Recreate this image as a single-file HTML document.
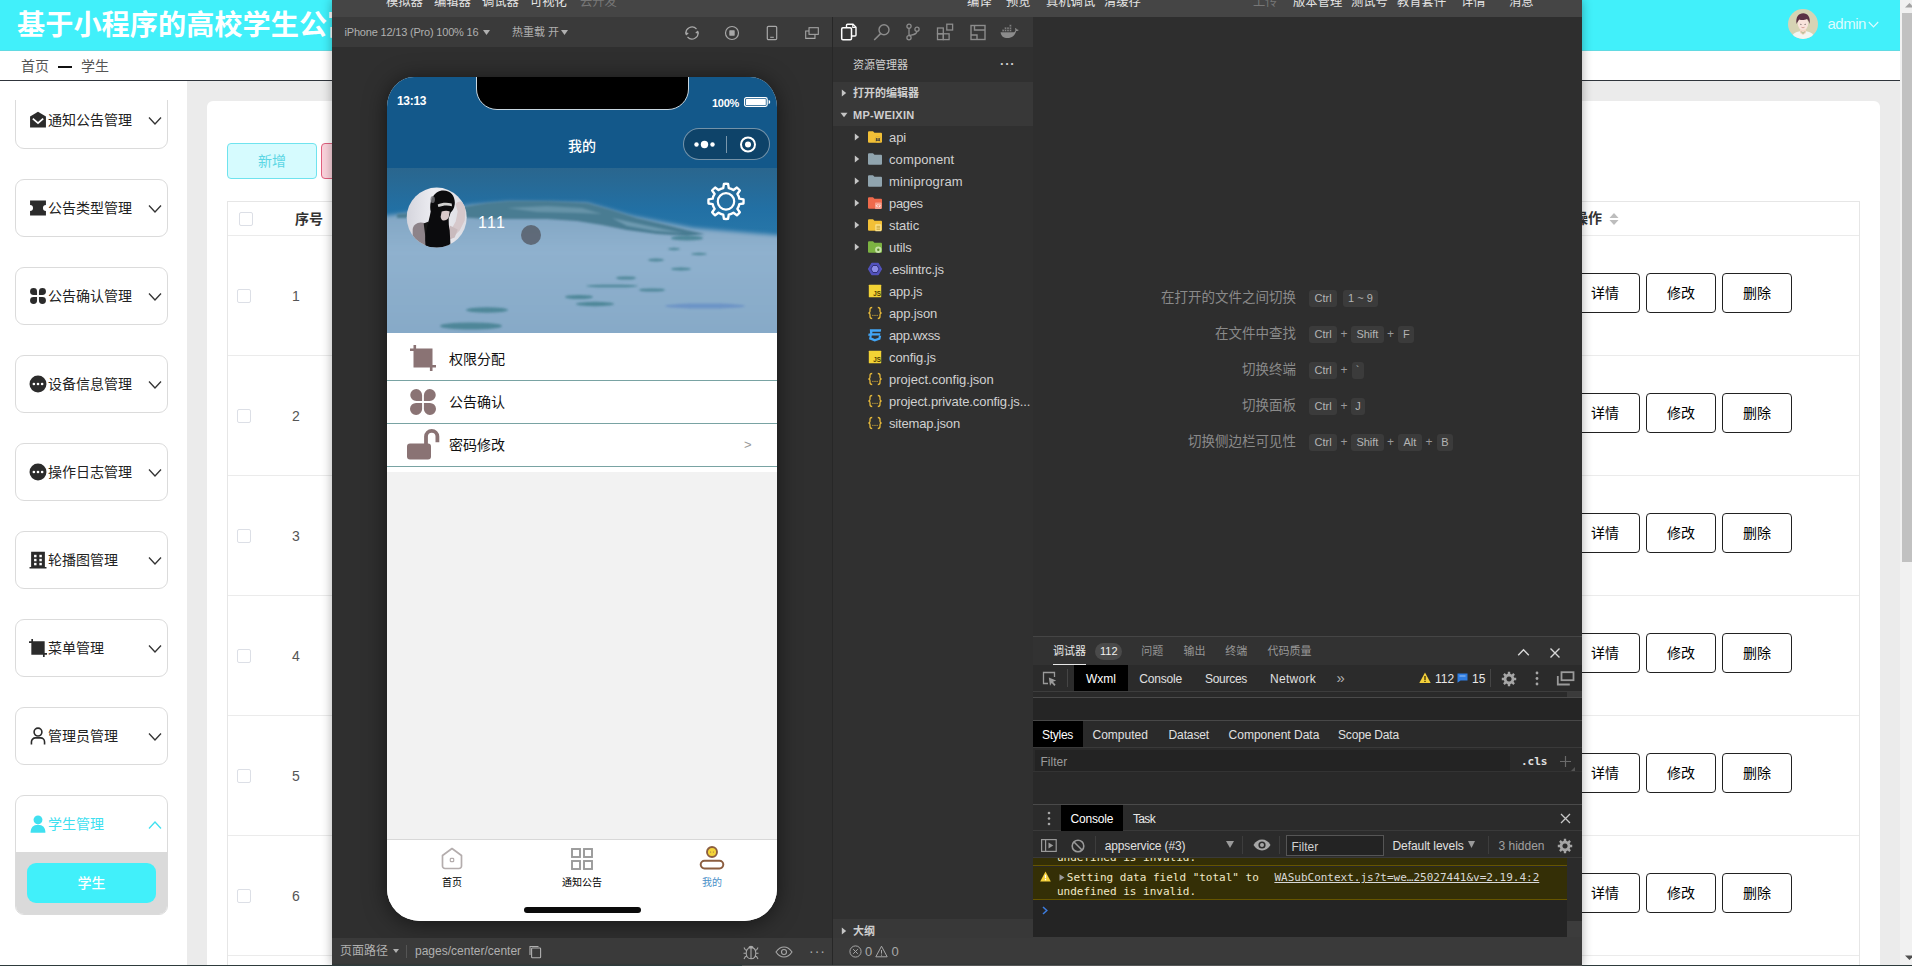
<!DOCTYPE html>
<html lang="zh-CN">
<head>
<meta charset="utf-8">
<title>学生管理</title>
<style>
*{box-sizing:border-box;margin:0;padding:0}
html,body{width:1912px;height:966px;overflow:hidden;background:#fff}
body{position:relative;font-family:"Liberation Sans","Noto Sans CJK SC",sans-serif;font-size:14px;color:#333}
.abs{position:absolute}
/* ---------- admin page ---------- */
#hdr{position:absolute;left:0;top:0;width:1900px;height:51px;background:#41f0fa;border-bottom:1px solid #62dae2}
#hdr .ttl{position:absolute;left:17px;top:4.500px;font-size:28.2px;font-weight:700;color:#fff;white-space:nowrap;line-height:40px;letter-spacing:0}
#crumb{position:absolute;left:0;top:51px;width:1900px;height:30px;background:#fff;border-bottom:1px solid #30353c}
#crumb span{position:absolute;top:6px;font-size:14px;color:#555;line-height:18px}
#side{position:absolute;left:0;top:81px;width:187px;height:885px;background:#fff;overflow:hidden}
#mainbg{position:absolute;left:187px;top:81px;width:1713px;height:885px;background:#ebebeb}
#card{position:absolute;left:207px;top:101px;width:1673px;height:880px;background:#fff;border-radius:6px}
.mi{position:absolute;left:15px;width:153px;height:58px;border:1px solid #dbdbdb;border-radius:9px;background:#fff}
.mi .tx{position:absolute;left:32px;top:18px;font-size:14px;line-height:20px;color:#222;white-space:nowrap}
.mi svg.ic{position:absolute;left:12.500px;top:19px;width:18px;height:18px}
.mi svg.cv{position:absolute;left:132px;top:24px;width:14px;height:10px}
#scroll{position:absolute;left:1900px;top:0;width:12px;height:966px;background:#f1f1f1}
.btn{position:absolute;width:70px;height:40px;border:1px solid #222;border-radius:4px;background:#fff;color:#000;font-size:14px;line-height:38px;text-align:center}
.hl{position:absolute;height:1px;background:#ebebeb}
.cb{position:absolute;width:14px;height:14px;border:1px solid #dcdfe6;border-radius:2px;background:#fff}
.num{position:absolute;left:281px;width:30px;text-align:center;font-size:14px;color:#555;line-height:20px}

/* ---------- devtools ---------- */
#dev{position:absolute;left:332px;top:0;width:1250px;height:966px;background:#2e2e2e;box-shadow:0 0 10px rgba(0,0,0,.32);font-family:"Liberation Sans","Noto Sans CJK SC",sans-serif;color:#ccc;overflow:hidden}
#dev .mb{position:absolute;left:0;top:0;width:1250px;height:17px;background:#454545}
#dev .mb span{position:absolute;top:-5.600px;font-size:12.3px;line-height:16px;color:#e4e4e4;white-space:nowrap}
#dev .tb{position:absolute;left:0;top:17px;width:501px;height:30px;background:#3a3a3a}
#sim{position:absolute;left:0;top:47px;width:501px;height:891px;background:#2f2f2f}
#simbar{position:absolute;left:0;top:938px;width:501px;height:28px;background:#3a3a3a}
#sb{position:absolute;left:501px;top:17px;width:200px;height:949px;background:#303030;box-shadow:-1px 0 0 #272727}
#ed{position:absolute;left:701px;top:17px;width:549px;height:949px;background:#2e2e2e}
.tr{position:absolute;left:0;width:200px;height:22px}
.tr .t{position:absolute;left:56px;top:2.500px;font-size:13px;line-height:18px;color:#d0d0d0;white-space:nowrap}
.tr svg.fi{position:absolute;left:34px;top:3px;width:16px;height:16px}
.tr svg.ar{position:absolute;left:21px;top:7px;width:6px;height:8px}
.kl{position:absolute;right:286px;margin-top:1px;font-size:13.5px;line-height:18px;color:#8a8a8a;white-space:nowrap}
.kb{position:absolute;height:17px;border-radius:3px;background:#3b3b3b;color:#b4b4b4;font-size:11px;line-height:17px;text-align:center}
.kp{position:absolute;margin-top:1px;font-size:12px;line-height:17px;color:#999}

#ph{position:absolute;left:55px;top:30px;width:390px;height:844px;border-radius:27px 27px 33px 33px/30px 30px 32px 32px;overflow:hidden;background:#f2f2f2;box-shadow:0 2px 22px rgba(0,0,0,.55)}
#ph .nav{position:absolute;left:0;top:0;width:390px;height:91px;background:#13588a}
#ph .row{position:absolute;left:0;width:390px;background:#fff;border-bottom:1px solid #79a3a3}
#ph .row .t{position:absolute;left:62px;font-size:14px;line-height:20px;color:#111}
#ph .tab{position:absolute;top:799px;width:80px;text-align:center;font-size:10px;line-height:14px;color:#000}

#dbg{position:absolute;left:0;top:619px;width:549px;height:302px;background:#292929;font-size:12px}
#dbg .g{position:absolute;left:0;width:549px}
#dbg .t{position:absolute;white-space:nowrap;line-height:16px}
#dbg .mono{font-family:"DejaVu Sans Mono","Liberation Mono",monospace}
</style>
</head>
<body>
<!-- ================= ADMIN PAGE ================= -->
<div id="hdr">
  <div class="ttl">基于小程序的高校学生公寓管理系统</div>
  <svg class="abs" style="left:1788px;top:9px" width="30" height="30" viewBox="0 0 30 30">
    <defs><clipPath id="avc"><circle cx="15" cy="15" r="15"/></clipPath></defs>
    <g clip-path="url(#avc)">
      <rect width="30" height="30" fill="#d6d3b4"/>
      <path d="M3 30c1-6 6-8 12-8s11 2 12 8z" fill="#f3f6f2"/>
      <path d="M12 20h6v4l-3 2-3-2z" fill="#f4d6c4"/>
      <ellipse cx="15" cy="14.800" rx="5.200" ry="6.200" fill="#f9e3dc"/>
      <path d="M8.600 15c-1.200-7 2-10.800 6.600-10.800 4.400 0 7.600 3.600 6.300 10.800-.6-2.600-1.300-4.200-2.600-5-2 1.200-5.600 1.400-7.600.5-1 1-1.800 2.500-2.700 4.500z" fill="#5b3045"/>
      <circle cx="12.900" cy="15.200" r=".55" fill="#3a2a2a"/><circle cx="17.100" cy="15.200" r=".55" fill="#3a2a2a"/>
      <path d="M13.200 22.500l1.800 2 1.800-2" stroke="#8fae7a" stroke-width=".9" fill="none"/>
      <path d="M13.500 18.300q1.500.9 3 0" stroke="#c0736a" stroke-width=".6" fill="none"/>
    </g>
  </svg>
  <div class="abs" style="left:1827.500px;top:13.500px;font-size:15px;letter-spacing:-.5px;line-height:20px;color:#dcfcff">admin</div>
  <svg class="abs" style="left:1867.500px;top:21px" width="11" height="7" viewBox="0 0 11 7"><path d="M.8 1l4.700 4.800L10.200 1" fill="none" stroke="#dcfcff" stroke-width="1.200"/></svg>
</div>
<div id="crumb">
  <span style="left:21px">首页</span>
  <div class="abs" style="left:58px;top:15px;width:14px;height:2px;background:#111"></div>
  <span style="left:81px">学生</span>
</div>
<div id="mainbg"></div>
<div id="side"></div>
<div class="abs" style="left:0;top:100px;width:187px;height:866px;overflow:hidden">
<div class="mi" style="top:-9.0px"><svg class="ic" viewBox="0 0 17 17"><path d="M8.500.6L16 5.200V15.600H1V5.200z" fill="#2b2b2b"/><path d="M3.600 7.200l4.900 4.300 4.900-4.300" fill="none" stroke="#fff" stroke-width="1.700"/></svg><div class="tx">通知公告管理</div><svg class="cv" viewBox="0 0 14 10"><path d="M1 1.500l6 6.500 6-6.500" fill="none" stroke="#333" stroke-width="1.300"/></svg></div>
<div class="mi" style="top:79.0px"><svg class="ic" viewBox="0 0 17 17"><path d="M1 1.500h15v4.200a2.800 2.800 0 0 0 0 5.600v4.200H1v-4.200a2.800 2.800 0 0 0 0-5.600z" fill="#2b2b2b"/></svg><div class="tx">公告类型管理</div><svg class="cv" viewBox="0 0 14 10"><path d="M1 1.500l6 6.500 6-6.500" fill="none" stroke="#333" stroke-width="1.300"/></svg></div>
<div class="mi" style="top:167.0px"><svg class="ic" viewBox="0 0 17 17"><path d="M4.300 1A3.300 3.300 0 0 1 7.600 4.300V7.600H4.300A3.300 3.300 0 0 1 4.300 1zM12.700 1A3.300 3.300 0 0 1 12.700 7.600H9.400V4.300A3.300 3.300 0 0 1 12.700 1zM4.300 9.400H7.600V12.700A3.300 3.300 0 1 1 4.300 9.400zM9.400 9.400H12.700A3.300 3.300 0 1 1 9.400 12.700z" fill="#2b2b2b"/></svg><div class="tx">公告确认管理</div><svg class="cv" viewBox="0 0 14 10"><path d="M1 1.500l6 6.500 6-6.500" fill="none" stroke="#333" stroke-width="1.300"/></svg></div>
<div class="mi" style="top:255.0px"><svg class="ic" viewBox="0 0 17 17"><circle cx="8.500" cy="8.500" r="8" fill="#2b2b2b"/><circle cx="4.600" cy="8.500" r="1.250" fill="#fff"/><circle cx="8.500" cy="8.500" r="1.250" fill="#fff"/><circle cx="12.400" cy="8.500" r="1.250" fill="#fff"/></svg><div class="tx">设备信息管理</div><svg class="cv" viewBox="0 0 14 10"><path d="M1 1.500l6 6.500 6-6.500" fill="none" stroke="#333" stroke-width="1.300"/></svg></div>
<div class="mi" style="top:343.0px"><svg class="ic" viewBox="0 0 17 17"><circle cx="8.500" cy="8.500" r="8" fill="#2b2b2b"/><circle cx="4.600" cy="8.500" r="1.250" fill="#fff"/><circle cx="8.500" cy="8.500" r="1.250" fill="#fff"/><circle cx="12.400" cy="8.500" r="1.250" fill="#fff"/></svg><div class="tx">操作日志管理</div><svg class="cv" viewBox="0 0 14 10"><path d="M1 1.500l6 6.500 6-6.500" fill="none" stroke="#333" stroke-width="1.300"/></svg></div>
<div class="mi" style="top:431.0px"><svg class="ic" viewBox="0 0 17 17"><path d="M2 .8h13v14.400h1.500v1.300H.5v-1.300H2z" fill="#2b2b2b"/><g fill="#fff"><rect x="4.800" y="3.600" width="2.300" height="2.300"/><rect x="9.800" y="3.600" width="2.300" height="2.300"/><rect x="4.800" y="7.400" width="2.300" height="2.300"/><rect x="9.800" y="7.400" width="2.300" height="2.300"/><rect x="4.800" y="11.200" width="2.300" height="2.300"/><rect x="9.800" y="11.200" width="2.300" height="2.300"/></g></svg><div class="tx">轮播图管理</div><svg class="cv" viewBox="0 0 14 10"><path d="M1 1.500l6 6.500 6-6.500" fill="none" stroke="#333" stroke-width="1.300"/></svg></div>
<div class="mi" style="top:519.0px"><svg class="ic" viewBox="0 0 17 17"><path d="M2.200 0h1.600v2.200H14.800V13.200H17v1.600H14.800V17H13.200V14.800H2.200V3.800H0V2.200H2.200z" fill="#2b2b2b"/></svg><div class="tx">菜单管理</div><svg class="cv" viewBox="0 0 14 10"><path d="M1 1.500l6 6.500 6-6.500" fill="none" stroke="#333" stroke-width="1.300"/></svg></div>
<div class="mi" style="top:607.0px"><svg class="ic" viewBox="0 0 17 17"><circle cx="8.500" cy="4.800" r="3.700" fill="none" stroke="#2b2b2b" stroke-width="1.500"/><path d="M2.300 16.500v-2.400a3.800 3.800 0 0 1 3.800-3.800h4.800a3.800 3.800 0 0 1 3.800 3.800v2.400" fill="none" stroke="#2b2b2b" stroke-width="1.500"/></svg><div class="tx">管理员管理</div><svg class="cv" viewBox="0 0 14 10"><path d="M1 1.500l6 6.500 6-6.500" fill="none" stroke="#333" stroke-width="1.300"/></svg></div>
<div class="mi" style="top:695.0px;height:120px;overflow:hidden"><svg class="ic" viewBox="0 0 17 17"><circle cx="8.500" cy="4.600" r="4.200" fill="#40e0f0"/><path d="M1.500 16.800c0-5 2.500-7.600 7-7.600s7 2.600 7 7.600z" fill="#40e0f0"/></svg><div class="tx" style="color:#40e0f0">学生管理</div><svg class="cv" viewBox="0 0 14 10"><path d="M1 8.500l6-6.500 6 6.500" fill="none" stroke="#40e0f0" stroke-width="1.300"/></svg><div class="abs" style="left:0;top:56px;width:152px;height:64px;background:#dadada"></div><div class="abs" style="left:11px;top:67px;width:129px;height:40px;border-radius:9px;background:#41f0fa;color:#fff;font-size:14px;font-weight:500;line-height:41px;text-align:center">学生</div></div>
</div>
<div id="card"></div>
<div class="abs" style="left:227px;top:143px;width:90px;height:36px;border:1px solid #6fe3ee;border-radius:4px;background:#d6fbfe;color:#5bd6e4;font-size:14px;line-height:34px;text-align:center">新增</div>
<div class="abs" style="left:321px;top:143px;width:90px;height:36px;border:1px solid #e0607e;border-radius:4px;background:#fbd3dc;color:#e0607e;font-size:14px;line-height:34px;text-align:center">删除</div>
<div class="abs" style="left:227px;top:201px;width:1633px;height:780px;border:1px solid #e6e6e6;border-bottom:none"></div>
<div class="cb" style="left:239px;top:212px"></div>
<div class="abs" style="left:295px;top:209px;font-size:14px;font-weight:700;color:#333;line-height:20px">序号</div>
<div class="abs" style="left:1574px;top:208px;font-size:14px;font-weight:700;color:#333;line-height:20px">操作</div>
<svg class="abs" style="left:1609px;top:212px" width="10" height="14" viewBox="0 0 10 14"><path d="M5 1L9.500 6H.5z" fill="#bdbdbd"/><path d="M5 13L9.500 8H.5z" fill="#bdbdbd"/></svg>
<div class="hl" style="left:228px;top:235px;width:1631px"></div>
<div class="hl" style="left:228px;top:355px;width:1631px"></div>
<div class="hl" style="left:228px;top:475px;width:1631px"></div>
<div class="hl" style="left:228px;top:595px;width:1631px"></div>
<div class="hl" style="left:228px;top:715px;width:1631px"></div>
<div class="hl" style="left:228px;top:835px;width:1631px"></div>
<div class="hl" style="left:228px;top:955px;width:1631px"></div>
<div class="cb" style="left:237px;top:289.0px"></div>
<div class="num" style="top:286.0px">1</div>
<div class="btn" style="left:1570px;top:273px">详情</div>
<div class="btn" style="left:1646px;top:273px">修改</div>
<div class="btn" style="left:1722px;top:273px">删除</div>
<div class="cb" style="left:237px;top:409.0px"></div>
<div class="num" style="top:406.0px">2</div>
<div class="btn" style="left:1570px;top:393px">详情</div>
<div class="btn" style="left:1646px;top:393px">修改</div>
<div class="btn" style="left:1722px;top:393px">删除</div>
<div class="cb" style="left:237px;top:529.0px"></div>
<div class="num" style="top:526.0px">3</div>
<div class="btn" style="left:1570px;top:513px">详情</div>
<div class="btn" style="left:1646px;top:513px">修改</div>
<div class="btn" style="left:1722px;top:513px">删除</div>
<div class="cb" style="left:237px;top:649.0px"></div>
<div class="num" style="top:646.0px">4</div>
<div class="btn" style="left:1570px;top:633px">详情</div>
<div class="btn" style="left:1646px;top:633px">修改</div>
<div class="btn" style="left:1722px;top:633px">删除</div>
<div class="cb" style="left:237px;top:769.0px"></div>
<div class="num" style="top:766.0px">5</div>
<div class="btn" style="left:1570px;top:753px">详情</div>
<div class="btn" style="left:1646px;top:753px">修改</div>
<div class="btn" style="left:1722px;top:753px">删除</div>
<div class="cb" style="left:237px;top:889.0px"></div>
<div class="num" style="top:886.0px">6</div>
<div class="btn" style="left:1570px;top:873px">详情</div>
<div class="btn" style="left:1646px;top:873px">修改</div>
<div class="btn" style="left:1722px;top:873px">删除</div>
<div id="scroll">
  <div class="abs" style="left:2px;top:13px;width:10px;height:549px;background:#c1c1c1"></div>
  <svg class="abs" style="left:5px;top:3px" width="9" height="5" viewBox="0 0 9 5"><path d="M0 4.500L4.500 0 9 4.500z" fill="#a3a3a3"/></svg>
  <svg class="abs" style="left:5px;top:955px" width="9" height="5" viewBox="0 0 9 5"><path d="M0 .5L4.500 5 9 .5z" fill="#505050"/></svg>
</div>
<!-- ================= DEVTOOLS WINDOW ================= -->
<div id="dev">
<div class="mb"><span style="left:54px">模拟器</span><span style="left:102px">编辑器</span><span style="left:150px">调试器</span><span style="left:198px">可视化</span><span style="left:248px;color:#777">云开发</span><span style="left:635px">编译</span><span style="left:674px">预览</span><span style="left:714px">真机调试</span><span style="left:772px">清缓存</span><span style="left:921px;color:#777">上传</span><span style="left:961px">版本管理</span><span style="left:1019px">测试号</span><span style="left:1065px">教育套件</span><span style="left:1129px">详情</span><span style="left:1177px">消息</span></div>
<div class="tb"><div class="abs" style="left:12.500px;top:7px;font-size:11px;letter-spacing:-.19px;line-height:16px;color:#b0b0b0;white-space:nowrap">iPhone 12/13 (Pro) 100% 16</div><svg class="abs" style="left:150.500px;top:13px" width="7" height="5" viewBox="0 0 7 5"><path d="M0 0h7L3.500 5z" fill="#b0b0b0"/></svg><div class="abs" style="left:180px;top:7px;font-size:11px;line-height:16px;color:#b0b0b0;white-space:nowrap">热重载 开</div><svg class="abs" style="left:229px;top:13px" width="7" height="5" viewBox="0 0 7 5"><path d="M0 0h7L3.500 5z" fill="#b0b0b0"/></svg><svg class="abs" style="left:352px;top:8px" width="16" height="16" viewBox="0 0 16 16"><path d="M2.300 9.800A6 6 0 0 1 12.500 4M13.700 6.200A6 6 0 0 1 3.500 12" fill="none" stroke="#a8a8a8" stroke-width="1.200"/><path d="M1 7.200l1.500 3.400 2.300-2.600zM15 8.800l-1.500-3.400-2.300 2.600z" fill="#a8a8a8"/></svg><svg class="abs" style="left:392px;top:8px" width="16" height="16" viewBox="0 0 16 16"><circle cx="8" cy="8" r="6.500" fill="none" stroke="#a8a8a8" stroke-width="1.200"/><rect x="5.300" y="5.300" width="5.400" height="5.400" rx=".6" fill="#a8a8a8"/></svg><svg class="abs" style="left:434px;top:8px" width="12" height="16" viewBox="0 0 12 16"><rect x="1.300" y="1.300" width="9.400" height="13.400" rx="1.200" fill="none" stroke="#a8a8a8" stroke-width="1.200"/><path d="M4.200 12.300h3.600" stroke="#a8a8a8" stroke-width="1.100"/></svg><svg class="abs" style="left:473px;top:10px" width="14" height="12.250" viewBox="0 0 16 14"><rect x="4.600" y=".8" width="10.600" height="7.600" fill="none" stroke="#a8a8a8" stroke-width="1.200"/><path d="M4.600 4.600H.8v8.400h10.600V8.600" fill="none" stroke="#a8a8a8" stroke-width="1.200"/></svg></div>
<div id="sim">
<div id="ph">
 <div class="nav">
  <div class="abs" style="left:89px;top:-2px;width:213px;height:35px;background:#000;border-radius:0 0 21px 21px;border:1px solid #c8d6e0"></div>
  <div class="abs" style="left:10px;top:16px;font-size:12px;font-weight:700;line-height:16px;color:#fff;letter-spacing:-.3px">13:13</div>
  <div class="abs" style="left:325px;top:18px;font-size:11px;font-weight:700;line-height:16px;color:#fff;letter-spacing:-.3px">100%</div>
  <svg class="abs" style="left:357px;top:20px" width="27" height="10" viewBox="0 0 27 10"><rect x=".6" y=".6" width="22.600" height="8.800" rx="1.800" fill="none" stroke="#fff" stroke-width="1.200"/><rect x="2" y="2" width="19.800" height="6" rx=".6" fill="#fff"/><path d="M24.600 3v4c1.300-.3 1.600-1.200 1.600-2s-.3-1.700-1.600-2z" fill="#fff"/></svg>
  <div class="abs" style="left:165px;top:59px;width:60px;text-align:center;font-size:14px;font-weight:500;line-height:20px;color:#fff">我的</div>
  <div class="abs" style="left:296px;top:51px;width:87px;height:32px;border-radius:16px;border:1px solid rgba(255,255,255,.42);background:rgba(0,0,0,.24)"></div>
  <svg class="abs" style="left:296px;top:51px" width="87" height="32" viewBox="0 0 87 32"><circle cx="13.500" cy="16.500" r="2.200" fill="#fff"/><circle cx="21.500" cy="16.500" r="3.700" fill="#fff"/><circle cx="29.500" cy="16.500" r="2.200" fill="#fff"/><path d="M43.500 8v17" stroke="rgba(255,255,255,.45)" stroke-width="1"/><circle cx="65" cy="16.500" r="7" fill="none" stroke="#fff" stroke-width="2"/><circle cx="65" cy="16.500" r="3" fill="#fff"/></svg>
 </div>
 <svg class="abs" style="left:0;top:91px" width="390" height="165" viewBox="0 0 390 165">
  <defs>
   <linearGradient id="sky" x1="0" y1="0" x2="0" y2="1"><stop offset="0" stop-color="#2a668e"/><stop offset=".25" stop-color="#2270a4"/><stop offset=".5" stop-color="#2a7aac"/><stop offset="1" stop-color="#3a82b0"/></linearGradient>
   <linearGradient id="snow" x1="0" y1="0" x2="0" y2="1"><stop offset="0" stop-color="#7ea3c1"/><stop offset=".35" stop-color="#8fb1ce"/><stop offset="1" stop-color="#86a9c7"/></linearGradient>
   <filter id="b3" x="-10%" y="-10%" width="120%" height="120%"><feGaussianBlur stdDeviation="2.200"/></filter>
   <filter id="b1" x="-10%" y="-30%" width="120%" height="160%"><feGaussianBlur stdDeviation="1.300"/></filter>
  </defs>
  <rect width="390" height="165" fill="url(#sky)"/>
  <path d="M-10 49L20 45 60 42 82 37 122 34 200 35 245 48 306 60 400 68V175H-10z" fill="url(#snow)" filter="url(#b3)"/>
  <path d="M70 40L100 35 122 33 160 33 200 35 225 42 250 50 280 57 300 62 318 66 300 68 270 66 240 62 215 57 190 53 160 51 130 51 100 51 70 49 40 50 10 50 10 46 40 44z" fill="#497b92" filter="url(#b1)"/>
  <path d="M120 40L160 38 195 40 215 46 190 45 150 44z" fill="#7ea6ba" opacity=".55" filter="url(#b1)"/>
  <path d="M225 50L262 58 296 65 268 63 240 58z" fill="#86adc4" opacity=".6" filter="url(#b1)"/>
  <g fill="#3f7e8d" filter="url(#b1)" opacity=".8">
   <ellipse cx="100" cy="142" rx="21" ry="2.800"/><ellipse cx="84" cy="158" rx="31" ry="3.600"/>
   <ellipse cx="192" cy="129" rx="14" ry="2"/><ellipse cx="208" cy="136" rx="19" ry="2.200"/>
   <ellipse cx="239" cy="110" rx="10" ry="1.600"/><ellipse cx="265" cy="122" rx="13" ry="1.600"/>
   <ellipse cx="269" cy="92" rx="8" ry="1.500"/><ellipse cx="294" cy="101" rx="10" ry="1.500"/>
   <ellipse cx="287" cy="81" rx="6" ry="1.200"/><ellipse cx="312" cy="86" rx="8" ry="1.200"/>
   <ellipse cx="300" cy="70" rx="16" ry="2.600"/><ellipse cx="225" cy="118" rx="26" ry="1.300"/>
  </g>
  <ellipse cx="318" cy="138" rx="40" ry="2.600" fill="#6b92c6" filter="url(#b1)" opacity=".9"/>
  <!-- avatar -->
  <defs><clipPath id="avp"><circle cx="49.700" cy="49.600" r="30"/></clipPath>
  <linearGradient id="avbg" x1="0" y1="0" x2="1" y2="0"><stop offset="0" stop-color="#d4d4dc"/><stop offset=".45" stop-color="#ededf2"/><stop offset="1" stop-color="#dcdce2"/></linearGradient></defs>
  <g clip-path="url(#avp)"><g transform="translate(19.700,19.600)">
   <rect x="-1" y="-1" width="62" height="62" fill="url(#avbg)"/>
   <path d="M49 17c1-3 5-4 8-2l2 6-1 12-5 10-8 8-4-3 8-14 2-10z" fill="#d6c8cb"/>
   <path d="M43 38l8 4-3 8-8 3z" fill="#c9babd"/>
   <path d="M6 60V42c0-4 4-7 8-7l8 1 2 24z" fill="#8d8389"/>
   <path d="M17 36l5-2 3 26h-5z" fill="#161616"/>
   <path d="M24 24c-2-8 2-20 11-21 9-1 14 6 13 14-.5 4-2 6-4 8l-2 6c0 4 0 8 1 12l1 19-24 2c-2-8-2-14 0-22 1-6 3-12 4-18z" fill="#0b0b0d"/>
   <path d="M35 24c3-1 6-1 8 0l-1 6c-1 2-3 3-5 3s-3-2-3-4z" fill="#d9c9ca"/>
   <path d="M31 17c4-2 9-2.500 14-1l.3 2.600c-5-1.300-9-.8-13.600.9z" fill="#e6e6e6" opacity=".9"/>
   <ellipse cx="26" cy="12" rx="2.200" ry="3.500" fill="#77777c" opacity=".8"/>
  </g></g>
  <text x="91" y="59.500" font-family="Liberation Sans, sans-serif" font-size="16" fill="#fff" letter-spacing="1.300">111</text>
  <circle cx="144" cy="67" r="10" fill="#555c66" opacity=".82"/>
  <g transform="translate(319,13.400) scale(1)">
   <path d="M17.24 6.68L17.93 2.52A17.60 17.60 0 0 1 22.07 2.52L22.76 6.68A13.60 13.60 0 0 1 27.47 8.63L30.90 6.18A17.60 17.60 0 0 1 33.82 9.10L31.37 12.53A13.60 13.60 0 0 1 33.32 17.24L37.48 17.93A17.60 17.60 0 0 1 37.48 22.07L33.32 22.76A13.60 13.60 0 0 1 31.37 27.47L33.82 30.90A17.60 17.60 0 0 1 30.90 33.82L27.47 31.37A13.60 13.60 0 0 1 22.76 33.32L22.07 37.48A17.60 17.60 0 0 1 17.93 37.48L17.24 33.32A13.60 13.60 0 0 1 12.53 31.37L9.10 33.82A17.60 17.60 0 0 1 6.18 30.90L8.63 27.47A13.60 13.60 0 0 1 6.68 22.76L2.52 22.07A17.60 17.60 0 0 1 2.52 17.93L6.68 17.24A13.60 13.60 0 0 1 8.63 12.53L6.18 9.10A17.60 17.60 0 0 1 9.10 6.18L12.53 8.63A13.60 13.60 0 0 1 17.24 6.68Z" fill="none" stroke="#fff" stroke-width="2.400" stroke-linejoin="round"/>
   <circle cx="20" cy="20" r="8.200" fill="none" stroke="#fff" stroke-width="2.200"/>
  </g>
 </svg>
 <div class="row" style="top:256px;height:48px"><div class="t" style="top:16px">权限分配</div>
  <svg class="abs" style="left:22px;top:11px" width="28" height="28" viewBox="0 0 28 28"><path d="M4.500 1h2.600v3.500H23.500V20.900H27v2.600H23.500V27H20.900V23.500H4.500V7.100H1V4.500H4.500z" fill="#8a7374"/></svg></div>
 <div class="row" style="top:304px;height:43px"><div class="t" style="top:11px">公告确认</div>
  <svg class="abs" style="left:23px;top:8px" width="26" height="26" viewBox="0 0 26 26"><path d="M6.300 0A6.300 6.300 0 0 1 12.100 6.300V12.100H6.300A6.050 6.050 0 0 1 6.300 0zM19.700 0A6.050 6.050 0 0 1 19.700 12.100H13.900V6.300A6.300 6.300 0 0 1 19.700 0zM6.300 13.900H12.100V19.700A6.050 6.050 0 1 1 6.300 13.900zM13.900 13.900H19.700A6.050 6.050 0 1 1 13.900 19.700z" fill="#8a7374"/></svg></div>
 <div class="row" style="top:347px;height:43px"><div class="t" style="top:11px">密码修改</div>
  <svg class="abs" style="left:19px;top:3px" width="34" height="33" viewBox="0 0 34 33"><rect x="1" y="16.500" width="24" height="16" rx="3" fill="#8a7374"/><path d="M20 17V9.500a5.700 5.700 0 0 1 11.400 0v5.700" fill="none" stroke="#8a7374" stroke-width="3.800"/></svg>
  <div class="abs" style="left:357px;top:11px;font-size:13px;line-height:20px;color:#999">&gt;</div></div>
 <div class="abs" style="left:0;top:390px;width:390px;height:5px;background:#fff"></div>
 <div class="abs" style="left:0;top:762px;width:390px;height:82px;background:#fff;border-top:1px solid #d8d8d8"></div>
 <svg class="abs" style="left:53px;top:770px" width="24" height="24" viewBox="0 0 24 24"><path d="M2.500 8.500L12 1.500l9.500 7V19a2.500 2.500 0 0 1-2.500 2.500H5A2.500 2.500 0 0 1 2.500 19z" fill="none" stroke="#b4adad" stroke-width="1.700" stroke-linejoin="round"/><rect x="10.300" y="11.300" width="3.400" height="3.400" rx=".8" fill="none" stroke="#b4adad" stroke-width="1.200"/></svg>
 <svg class="abs" style="left:183px;top:770px" width="24" height="24" viewBox="0 0 24 24"><g fill="none" stroke="#9a9a9a" stroke-width="1.900"><rect x="2" y="2" width="8" height="8"/><rect x="14" y="2" width="8" height="8"/><rect x="2" y="14" width="8" height="8"/><rect x="14" y="14" width="8" height="8"/></g></svg>
 <svg class="abs" style="left:312px;top:768px" width="26" height="26" viewBox="0 0 26 26"><circle cx="13" cy="7" r="5" fill="#f4d43a" stroke="#8c5e40" stroke-width="1.900"/><circle cx="11.600" cy="7" r=".6" fill="#9a6a48"/><circle cx="14.400" cy="7" r=".6" fill="#9a6a48"/><rect x="1.700" y="15.800" width="22.600" height="7.600" rx="3.800" fill="#fff" stroke="#8c5e40" stroke-width="2"/></svg>
 <div class="tab" style="left:25px">首页</div>
 <div class="tab" style="left:155px">通知公告</div>
 <div class="tab" style="left:285px;color:#4a90c8">我的</div>
 <div class="abs" style="left:137px;top:830px;width:117px;height:5.500px;border-radius:3px;background:#0a0a0a"></div>
</div>
</div>
<div id="simbar"><div class="abs" style="left:8px;top:5px;font-size:12px;line-height:16px;color:#b0b0b0;white-space:nowrap">页面路径</div><svg class="abs" style="left:61px;top:949px;top:11px" width="6" height="4" viewBox="0 0 6 4"><path d="M0 0h6L3 4z" fill="#b0b0b0"/></svg><div class="abs" style="left:74px;top:7px;width:1px;height:13px;background:#555"></div><div class="abs" style="left:83px;top:5px;font-size:12px;line-height:16px;color:#b0b0b0;white-space:nowrap">pages/center/center</div><svg class="abs" style="left:197px;top:7px" width="13" height="14" viewBox="0 0 13 14"><rect x="2.600" y="3" width="9" height="9.800" rx=".8" fill="none" stroke="#b0b0b0" stroke-width="1.100"/><path d="M1 10V1.500h8.500" fill="none" stroke="#b0b0b0" stroke-width="1.100"/></svg><svg class="abs" style="left:410px;top:5px" width="18" height="18" viewBox="0 0 18 18"><path d="M9 4.600c3 0 4.800 2.300 4.800 5.600S12 15.800 9 15.800 4.200 13.500 4.200 10.200 6 4.600 9 4.600zM9 4.600V15.800M6.600 5.200a2.500 2.500 0 0 1 4.800 0M2 4.500l1.200 2.200 1.600.8M16 4.500l-1.200 2.200-1.600.8M1.500 10.200h2.700M13.800 10.200h2.700M2 16l1.300-2.200 1.500-.7M16 16l-1.300-2.200-1.500-.7" fill="none" stroke="#a8a8a8" stroke-width="1.100"/></svg><svg class="abs" style="left:443px;top:8px" width="18" height="12" viewBox="0 0 18 12"><path d="M1 6c2.200-3.300 5-5 8-5s5.800 1.700 8 5c-2.200 3.300-5 5-8 5s-5.800-1.700-8-5z" fill="none" stroke="#a8a8a8" stroke-width="1.100"/><circle cx="9" cy="6" r="2.500" fill="none" stroke="#a8a8a8" stroke-width="1.100"/></svg><div class="abs" style="left:477px;top:3px;font-size:14px;letter-spacing:1px;color:#a8a8a8;line-height:20px">···</div></div>
<div id="sb">
<div class="abs" style="left:0;top:0;width:200px;height:30px;background:#383838"></div>
<svg class="abs" style="left:7px;top:6px" width="18" height="18" viewBox="0 0 18 18"><path d="M6.500 4.500V2.200a1 1 0 0 1 1-1H13l3 3V12a1 1 0 0 1-1 1h-3" fill="none" stroke="#fff" stroke-width="1.400"/><path d="M12.800 1.500v3h3" fill="none" stroke="#fff" stroke-width="1.200"/><rect x="1.700" y="4.700" width="9.800" height="12" rx="1.200" fill="none" stroke="#fff" stroke-width="1.500"/></svg>
<svg class="abs" style="left:40px;top:6px" width="18" height="18" viewBox="0 0 18 18"><circle cx="11" cy="6.800" r="5" fill="none" stroke="#8c8c8c" stroke-width="1.400"/><path d="M7.600 10.600L1.200 17" stroke="#8c8c8c" stroke-width="1.500"/></svg>
<svg class="abs" style="left:72px;top:6px" width="16" height="18" viewBox="0 0 16 18"><circle cx="4" cy="3.200" r="2.100" fill="none" stroke="#8c8c8c" stroke-width="1.300"/><circle cx="4" cy="14.800" r="2.100" fill="none" stroke="#8c8c8c" stroke-width="1.300"/><circle cx="12" cy="6.200" r="2.100" fill="none" stroke="#8c8c8c" stroke-width="1.300"/><path d="M4 5.300v7.400M12 8.300c0 3-3.500 3.200-8 4.400" fill="none" stroke="#8c8c8c" stroke-width="1.300"/></svg>
<svg class="abs" style="left:103px;top:6px" width="18" height="18" viewBox="0 0 18 18"><g fill="none" stroke="#8c8c8c" stroke-width="1.300"><rect x="1.500" y="5" width="5.800" height="5.800"/><rect x="1.500" y="10.800" width="5.800" height="5.800"/><rect x="7.300" y="10.800" width="5.800" height="5.800"/><rect x="10.800" y="1.200" width="5.800" height="5.800"/></g></svg>
<svg class="abs" style="left:137px;top:7px" width="16" height="17" viewBox="0 0 16 17"><g fill="none" stroke="#8c8c8c" stroke-width="1.400"><rect x="1" y="1.500" width="14" height="14"/><path d="M4.500 1.500V6H15M1 11h6v4.500"/></g></svg>
<svg class="abs" style="left:167px;top:7px" width="19" height="16" viewBox="0 0 19 16"><path d="M.6 8.200h12.600c1 0 1.600-.5 2-1.300.3-1 .2-1.700-.3-2.500.8-.5 1.500.2 1.900 1.100.8-.2 1.500 0 1.900.4-.5.900-1.500 1.200-2.500 1.100C15 11.500 12 14 7.500 14 3.600 14 1 12.200.6 8.200z" fill="#8c8c8c"/><path d="M2.200 5.600h2v2h-2zM4.600 5.600h2v2h-2zM7 5.600h2v2H7zM9.400 5.600h2v2h-2zM4.600 3.200h2v2h-2zM7 3.200h2v2H7zM9.400 3.200h2v2h-2zM9.400.8h2v2h-2z" fill="#8c8c8c" stroke="#383838" stroke-width=".4"/></svg>
<div class="abs" style="left:20px;top:39.500px;font-size:11px;line-height:16px;color:#cfcfcf">资源管理器</div>
<div class="abs" style="left:167px;top:39px;font-size:13px;font-weight:700;letter-spacing:.8px;line-height:16px;color:#cfcfcf">···</div>
<div class="abs" style="left:0;top:65px;width:200px;height:44px;background:#383838"></div>
<svg class="abs" style="left:8px;top:72px" width="6" height="8" viewBox="0 0 6 8"><path d="M.8.500L5.200 4 .8 7.500z" fill="#c5c5c5"/></svg>
<div class="abs" style="left:20px;top:68px;font-size:11px;font-weight:700;line-height:16px;color:#cfcfcf">打开的编辑器</div>
<svg class="abs" style="left:7px;top:95px" width="8" height="6" viewBox="0 0 8 6"><path d="M.5.800L4 5.200 7.500.8z" fill="#c5c5c5"/></svg>
<div class="abs" style="left:20px;top:90px;font-size:11px;font-weight:700;letter-spacing:.23px;line-height:16px;color:#cfcfcf">MP-WEIXIN</div>
<div class="tr" style="top:109px"><svg class="ar" viewBox="0 0 6 8"><path d="M.8.500L5.200 4 .8 7.500z" fill="#c5c5c5"/></svg><svg class="fi" viewBox="0 0 16 16"><path d="M1 3.200a1 1 0 0 1 1-1h4l1.500 1.600H14a1 1 0 0 1 1 1V12.800a1 1 0 0 1-1 1H2a1 1 0 0 1-1-1z" fill="#f2c037"/><circle cx="11" cy="10.500" r="3.200" fill="#f2c037" stroke="#7a5a10" stroke-width=".1"/><path d="M9.600 9v3.200M12.200 9v3.200M8.800 10h4.200M8.800 11.400h4.200" stroke="#3a3a3a" stroke-width=".8"/></svg><div class="t" style="letter-spacing:-0.103px">api</div></div>
<div class="tr" style="top:131px"><svg class="ar" viewBox="0 0 6 8"><path d="M.8.500L5.200 4 .8 7.500z" fill="#c5c5c5"/></svg><svg class="fi" viewBox="0 0 16 16"><path d="M1 3.200a1 1 0 0 1 1-1h4l1.500 1.600H14a1 1 0 0 1 1 1V12.800a1 1 0 0 1-1 1H2a1 1 0 0 1-1-1z" fill="#90a4ae"/></svg><div class="t" style="letter-spacing:0.108px">component</div></div>
<div class="tr" style="top:153px"><svg class="ar" viewBox="0 0 6 8"><path d="M.8.500L5.200 4 .8 7.500z" fill="#c5c5c5"/></svg><svg class="fi" viewBox="0 0 16 16"><path d="M1 3.200a1 1 0 0 1 1-1h4l1.500 1.600H14a1 1 0 0 1 1 1V12.800a1 1 0 0 1-1 1H2a1 1 0 0 1-1-1z" fill="#90a4ae"/></svg><div class="t" style="letter-spacing:0.141px">miniprogram</div></div>
<div class="tr" style="top:175px"><svg class="ar" viewBox="0 0 6 8"><path d="M.8.500L5.200 4 .8 7.500z" fill="#c5c5c5"/></svg><svg class="fi" viewBox="0 0 16 16"><path d="M1 3.200a1 1 0 0 1 1-1h4l1.500 1.600H14a1 1 0 0 1 1 1V12.800a1 1 0 0 1-1 1H2a1 1 0 0 1-1-1z" fill="#ef6a4c"/><rect x="8" y="7.500" width="6.500" height="6.500" rx=".8" fill="#f6a08e"/><path d="M10.600 9.500l-1.300 1.300 1.300 1.300M12 9.500l1.300 1.300-1.300 1.300" stroke="#fff" stroke-width=".8" fill="none"/></svg><div class="t" style="letter-spacing:-0.324px">pages</div></div>
<div class="tr" style="top:197px"><svg class="ar" viewBox="0 0 6 8"><path d="M.8.500L5.200 4 .8 7.500z" fill="#c5c5c5"/></svg><svg class="fi" viewBox="0 0 16 16"><path d="M1 3.200a1 1 0 0 1 1-1h4l1.500 1.600H14a1 1 0 0 1 1 1V12.800a1 1 0 0 1-1 1H2a1 1 0 0 1-1-1z" fill="#f2c037"/><rect x="8.300" y="7.300" width="6" height="7" rx=".6" fill="#fbe28a"/><path d="M9.500 9.300h3.600M9.500 10.800h3.600M9.500 12.300h3.600" stroke="#b8901c" stroke-width=".7"/></svg><div class="t" style="letter-spacing:-0.040px">static</div></div>
<div class="tr" style="top:219px"><svg class="ar" viewBox="0 0 6 8"><path d="M.8.500L5.200 4 .8 7.500z" fill="#c5c5c5"/></svg><svg class="fi" viewBox="0 0 16 16"><path d="M1 3.200a1 1 0 0 1 1-1h4l1.500 1.600H14a1 1 0 0 1 1 1V12.800a1 1 0 0 1-1 1H2a1 1 0 0 1-1-1z" fill="#7cb342"/><circle cx="11.300" cy="10.800" r="3.200" fill="#c5e1a5"/><circle cx="11.300" cy="10.800" r="1.200" fill="#5a8a2a"/></svg><div class="t" style="letter-spacing:-0.064px">utils</div></div>
<div class="tr" style="top:241px"><svg class="fi" viewBox="0 0 16 16"><path d="M1.600 8l3.200-5.500h6.400L14.400 8l-3.200 5.500H4.800z" fill="#5252bd" stroke="#5252bd" stroke-width="1.400" stroke-linejoin="round"/><path d="M3.900 8l2.050-3.500h4.100L12.100 8l-2.050 3.500h-4.100z" fill="#8c8ce8" stroke="#303078" stroke-width="1" stroke-linejoin="round"/></svg><div class="t" style="letter-spacing:-0.258px">.eslintrc.js</div></div>
<div class="tr" style="top:263px"><svg class="fi" viewBox="0 0 16 16"><rect x="1.800" y="1.800" width="12.400" height="12.400" rx=".5" fill="#f3d335"/><text x="6.200" y="12.800" font-family="Liberation Sans, sans-serif" font-weight="700" font-size="6.300" fill="#4a3b00">JS</text></svg><div class="t" style="letter-spacing:-0.250px">app.js</div></div>
<div class="tr" style="top:285px"><svg class="fi" viewBox="0 0 16 16"><path d="M5.200 2.500c-1.700 0-2.200.6-2.200 2v1.800c0 1-.5 1.500-1.500 1.700 1 .2 1.500.7 1.500 1.700v1.800c0 1.400.5 2 2.200 2M10.800 2.500c1.700 0 2.200.6 2.200 2v1.800c0 1 .5 1.500 1.500 1.700-1 .2-1.500.7-1.500 1.700v1.800c0 1.400-.5 2-2.200 2" fill="none" stroke="#e6b93a" stroke-width="1.300"/><circle cx="5.900" cy="10.300" r=".65" fill="#e6b93a"/><circle cx="8" cy="10.300" r=".65" fill="#e6b93a"/><circle cx="10.100" cy="10.300" r=".65" fill="#e6b93a"/></svg><div class="t" style="letter-spacing:-0.132px">app.json</div></div>
<div class="tr" style="top:307px"><svg class="fi" viewBox="0 0 16 16"><path d="M2.800 2.200h11.400l-.5 2.500H5.500l-.3 1.600h8.200l-.4 2.100H4.800l-.3 1.700-.1.500 3.500 1.300 3.600-1.100.4-2h2.300l-.8 3.800L7.700 14.400 2 12.300l.7-3.600H1.200l.4-2.100h1.500z" fill="#42a5f5"/></svg><div class="t" style="letter-spacing:-0.413px">app.wxss</div></div>
<div class="tr" style="top:329px"><svg class="fi" viewBox="0 0 16 16"><rect x="1.800" y="1.800" width="12.400" height="12.400" rx=".5" fill="#f3d335"/><text x="6.200" y="12.800" font-family="Liberation Sans, sans-serif" font-weight="700" font-size="6.300" fill="#4a3b00">JS</text></svg><div class="t" style="letter-spacing:-0.089px">config.js</div></div>
<div class="tr" style="top:351px"><svg class="fi" viewBox="0 0 16 16"><path d="M5.200 2.500c-1.700 0-2.200.6-2.200 2v1.800c0 1-.5 1.500-1.500 1.700 1 .2 1.500.7 1.500 1.700v1.800c0 1.400.5 2 2.200 2M10.800 2.500c1.700 0 2.200.6 2.200 2v1.800c0 1 .5 1.500 1.500 1.700-1 .2-1.500.7-1.500 1.700v1.800c0 1.400-.5 2-2.200 2" fill="none" stroke="#e6b93a" stroke-width="1.300"/><circle cx="5.900" cy="10.300" r=".65" fill="#e6b93a"/><circle cx="8" cy="10.300" r=".65" fill="#e6b93a"/><circle cx="10.100" cy="10.300" r=".65" fill="#e6b93a"/></svg><div class="t" style="letter-spacing:0.001px">project.config.json</div></div>
<div class="tr" style="top:373px"><svg class="fi" viewBox="0 0 16 16"><path d="M5.200 2.500c-1.700 0-2.200.6-2.200 2v1.800c0 1-.5 1.500-1.500 1.700 1 .2 1.500.7 1.500 1.700v1.800c0 1.400.5 2 2.200 2M10.800 2.500c1.700 0 2.200.6 2.200 2v1.800c0 1 .5 1.500 1.500 1.700-1 .2-1.500.7-1.500 1.700v1.800c0 1.400-.5 2-2.200 2" fill="none" stroke="#e6b93a" stroke-width="1.300"/><circle cx="5.900" cy="10.300" r=".65" fill="#e6b93a"/><circle cx="8" cy="10.300" r=".65" fill="#e6b93a"/><circle cx="10.100" cy="10.300" r=".65" fill="#e6b93a"/></svg><div class="t" style="letter-spacing:-0.089px">project.private.config.js...</div></div>
<div class="tr" style="top:395px"><svg class="fi" viewBox="0 0 16 16"><path d="M5.200 2.500c-1.700 0-2.200.6-2.200 2v1.800c0 1-.5 1.500-1.500 1.700 1 .2 1.500.7 1.500 1.700v1.800c0 1.400.5 2 2.200 2M10.800 2.500c1.700 0 2.200.6 2.200 2v1.800c0 1 .5 1.500 1.500 1.700-1 .2-1.500.7-1.500 1.700v1.800c0 1.400-.5 2-2.200 2" fill="none" stroke="#e6b93a" stroke-width="1.300"/><circle cx="5.900" cy="10.300" r=".65" fill="#e6b93a"/><circle cx="8" cy="10.300" r=".65" fill="#e6b93a"/><circle cx="10.100" cy="10.300" r=".65" fill="#e6b93a"/></svg><div class="t" style="letter-spacing:-0.165px">sitemap.json</div></div>
<div class="abs" style="left:0;top:902px;width:200px;height:19px;background:#383838"></div>
<svg class="abs" style="left:8px;top:910px" width="6" height="8" viewBox="0 0 6 8"><path d="M.8.500L5.200 4 .8 7.500z" fill="#c5c5c5"/></svg>
<div class="abs" style="left:20px;top:906px;font-size:11px;font-weight:700;line-height:16px;color:#cfcfcf">大纲</div>
<div class="abs" style="left:0;top:921px;width:200px;height:28px;background:#3a3a3a"></div>
<svg class="abs" style="left:16px;top:928px" width="13" height="13" viewBox="0 0 13 13"><circle cx="6.500" cy="6.500" r="5.600" fill="none" stroke="#a8a8a8" stroke-width="1"/><path d="M4.200 4.200l4.600 4.600M8.800 4.200L4.200 8.800" stroke="#a8a8a8" stroke-width="1"/></svg>
<div class="abs" style="left:32px;top:926.500px;font-size:13px;line-height:16px;color:#a8a8a8">0</div>
<svg class="abs" style="left:42px;top:928px" width="13" height="13" viewBox="0 0 13 13"><path d="M6.500 1.200L12.200 11.800H.8z" fill="none" stroke="#a8a8a8" stroke-width="1"/><path d="M6.500 5v3.600M6.500 9.600v1.100" stroke="#a8a8a8" stroke-width="1"/></svg>
<div class="abs" style="left:58.500px;top:926.500px;font-size:13px;line-height:16px;color:#a8a8a8">0</div>
</div>
<div id="ed">
<div class="kl" style="top:271.0px">在打开的文件之间切换</div>
<div class="kb" style="left:276.4px;top:272.5px;width:27.3px">Ctrl</div>
<div class="kb" style="left:310.0px;top:272.5px;width:35px">1 ~ 9</div>
<div class="kl" style="top:307.1px">在文件中查找</div>
<div class="kb" style="left:276.4px;top:308.6px;width:27.3px">Ctrl</div>
<div class="kp" style="left:307.5px;top:308.1px">+</div>
<div class="kb" style="left:317.8px;top:308.6px;width:33.2px">Shift</div>
<div class="kp" style="left:354.0px;top:308.1px">+</div>
<div class="kb" style="left:365.4px;top:308.6px;width:16px">F</div>
<div class="kl" style="top:343.1px">切换终端</div>
<div class="kb" style="left:276.4px;top:344.6px;width:27.3px">Ctrl</div>
<div class="kp" style="left:307.5px;top:344.1px">+</div>
<div class="kb" style="left:318.5px;top:344.6px;width:12px">`</div>
<div class="kl" style="top:379.1px">切换面板</div>
<div class="kb" style="left:276.4px;top:380.6px;width:27.3px">Ctrl</div>
<div class="kp" style="left:307.5px;top:380.1px">+</div>
<div class="kb" style="left:317.8px;top:380.6px;width:14.5px">J</div>
<div class="kl" style="top:415.1px">切换侧边栏可见性</div>
<div class="kb" style="left:276.4px;top:416.6px;width:27.3px">Ctrl</div>
<div class="kp" style="left:307.5px;top:416.1px">+</div>
<div class="kb" style="left:317.8px;top:416.6px;width:33.2px">Shift</div>
<div class="kp" style="left:354.0px;top:416.1px">+</div>
<div class="kb" style="left:364.8px;top:416.6px;width:24.2px">Alt</div>
<div class="kp" style="left:392.5px;top:416.1px">+</div>
<div class="kb" style="left:404.0px;top:416.6px;width:16px">B</div>
<div id="dbg">
<div class="abs" style="left:0.0px;top:0.0px;width:549.0px;height:29.0px;background:#323232;border-top:1px solid #454545"></div>
<div class="t" style="left:20.0px;top:7.0px;font-size:11px;color:#e8e8e8;">调试器</div>
<div class="abs" style="left:20.0px;top:28.0px;width:33.0px;height:1.5px;background:#e8e8e8;"></div>
<div class="abs" style="left:61.5px;top:6.5px;width:27.0px;height:17.5px;background:#4a4a4a;border-radius:9px"></div>
<div class="t" style="left:67.0px;top:7.3px;font-size:11px;color:#f0f0f0;">112</div>
<div class="t" style="left:108.3px;top:7.0px;font-size:11px;color:#969696;">问题</div>
<div class="t" style="left:150.6px;top:7.0px;font-size:11px;color:#969696;">输出</div>
<div class="t" style="left:192.3px;top:7.0px;font-size:11px;color:#969696;">终端</div>
<div class="t" style="left:234.6px;top:7.0px;font-size:11px;color:#969696;">代码质量</div>
<svg class="abs" style="left:484px;top:12px" width="13" height="9" viewBox="0 0 13 9"><path d="M1.200 7.200L6.500 1.800l5.300 5.400" fill="none" stroke="#d8d8d8" stroke-width="1.400"/></svg>
<svg class="abs" style="left:516px;top:11px" width="12" height="12" viewBox="0 0 12 12"><path d="M1.500 1.500l9 9M10.500 1.500l-9 9" fill="none" stroke="#d8d8d8" stroke-width="1.400"/></svg>
<div class="abs" style="left:0.0px;top:29.0px;width:549.0px;height:26.5px;background:#2b2b2b;border-bottom:1px solid #3d3d3d"></div>
<svg class="abs" style="left:9px;top:35px" width="16" height="16" viewBox="0 0 16 16"><path d="M12.500 6V1.500h-11v11H6" fill="none" stroke="#9a9a9a" stroke-width="1.300"/><path d="M6.800 6.500l7.400 3-3.200 1.300 2.600 3-1.300 1.100-2.600-3-1.700 2.800z" fill="#9a9a9a"/></svg>
<div class="abs" style="left:34.0px;top:33.0px;width:1.0px;height:18.0px;background:#454545;"></div>
<div class="abs" style="left:41.0px;top:29.0px;width:54.0px;height:26.0px;background:#000;"></div>
<div class="t" style="left:53.0px;top:34.5px;font-size:12px;color:#fff;">Wxml</div>
<div class="t" style="left:106.3px;top:34.5px;font-size:12px;color:#e0e0e0;letter-spacing:-0.190px;">Console</div>
<div class="t" style="left:172.0px;top:34.5px;font-size:12px;color:#e0e0e0;letter-spacing:-0.290px;">Sources</div>
<div class="t" style="left:237.0px;top:34.5px;font-size:12px;color:#e0e0e0;letter-spacing:0.283px;">Network</div>
<div class="t" style="left:303.5px;top:33.5px;font-size:15px;color:#b0b0b0;">»</div>
<svg class="abs" style="left:386px;top:36px" width="12" height="12" viewBox="0 0 12 12"><path d="M6 .6L11.700 11H.3z" fill="#f4d03a"/><path d="M6 4v4M6 8.800v1.200" stroke="#3a2e00" stroke-width="1.300"/></svg>
<div class="t" style="left:402.0px;top:34.5px;font-size:12px;color:#e8e8e8;">112</div>
<svg class="abs" style="left:424px;top:37px" width="11" height="10" viewBox="0 0 11 10"><path d="M.5.500h10v7H3.500L.5 9.800z" fill="#2f7de1"/><path d="M2.500 3h6" stroke="#9cc4f5" stroke-width="1"/></svg>
<div class="t" style="left:439.0px;top:34.5px;font-size:12px;color:#e8e8e8;">15</div>
<div class="abs" style="left:457.0px;top:33.0px;width:1.0px;height:18.0px;background:#454545;"></div>
<svg class="abs" style="left:468.0px;top:34.5px" width="16" height="16" viewBox="0 0 16 16"><path d="M13.25 6.74 L15.21 6.86 L15.21 9.14 L13.25 9.26 L12.60 10.82 L13.91 12.29 L12.29 13.91 L10.82 12.60 L9.26 13.25 L9.14 15.21 L6.86 15.21 L6.74 13.25 L5.18 12.60 L3.71 13.91 L2.09 12.29 L3.40 10.82 L2.75 9.26 L0.79 9.14 L0.79 6.86 L2.75 6.74 L3.40 5.18 L2.09 3.71 L3.71 2.09 L5.18 3.40 L6.74 2.75 L6.86 0.79 L9.14 0.79 L9.26 2.75 L10.82 3.40 L12.29 2.09 L13.91 3.71 L12.60 5.18ZM8 5.400a2.600 2.600 0 1 0 .01 0z" fill="#a6a6a6" fill-rule="evenodd"/></svg>
<svg class="abs" style="left:502px;top:35px" width="4" height="15" viewBox="0 0 4 15"><circle cx="2" cy="2" r="1.400" fill="#a6a6a6"/><circle cx="2" cy="7.500" r="1.400" fill="#a6a6a6"/><circle cx="2" cy="13" r="1.400" fill="#a6a6a6"/></svg>
<svg class="abs" style="left:523px;top:35px" width="19" height="15" viewBox="0 0 19 15"><rect x="5.500" y="1.200" width="12" height="8" fill="none" stroke="#9a9a9a" stroke-width="1.800"/><path d="M1.800 5v8.500h12" fill="none" stroke="#9a9a9a" stroke-width="1.800"/></svg>
<div class="abs" style="left:0.0px;top:56.0px;width:549.0px;height:5.5px;background:#2a2a2a;"></div>
<div class="abs" style="left:533.5px;top:56.0px;width:15.0px;height:5.5px;background:#3b3b3b;"></div>
<div class="abs" style="left:0.0px;top:61.0px;width:549.0px;height:1.0px;background:#4a4a4a;"></div>
<div class="abs" style="left:0.0px;top:62.0px;width:549.0px;height:22.0px;background:#252525;"></div>
<div class="abs" style="left:0.0px;top:84.0px;width:549.0px;height:1.0px;background:#484848;"></div>
<div class="abs" style="left:0.0px;top:85.0px;width:549.0px;height:26.5px;background:#2a2a2a;border-bottom:1px solid #3a3a3a"></div>
<div class="abs" style="left:0.0px;top:85.0px;width:50.0px;height:26.0px;background:#000;"></div>
<div class="t" style="left:9.0px;top:90.5px;font-size:12px;color:#fff;letter-spacing:-0.282px;">Styles</div>
<div class="t" style="left:59.5px;top:90.5px;font-size:12px;color:#e0e0e0;">Computed</div>
<div class="t" style="left:135.6px;top:90.5px;font-size:12px;color:#e0e0e0;letter-spacing:-0.137px;">Dataset</div>
<div class="t" style="left:195.6px;top:90.5px;font-size:12px;color:#e0e0e0;">Component Data</div>
<div class="t" style="left:305.0px;top:90.5px;font-size:12px;color:#e0e0e0;letter-spacing:-0.172px;">Scope Data</div>
<div class="abs" style="left:0.0px;top:112.0px;width:549.0px;height:24.0px;background:#2a2a2a;border-bottom:1px solid #333"></div>
<div class="abs" style="left:2.0px;top:114.0px;width:1474.0px;height:0.0px;background:#222;"></div>
<div class="abs" style="left:2.0px;top:114.0px;width:474.5px;height:21.0px;background:#232323;"></div>
<div class="t" style="left:7.5px;top:118.0px;font-size:12px;color:#9a9a9a;">Filter</div>
<div class="t mono" style="left:488.0px;top:117.5px;font-size:11px;color:#e0e0e0;font-weight:700">.cls</div>
<svg class="abs" style="left:526.5px;top:120px" width="11" height="11" viewBox="0 0 11 11"><path d="M5.500 0v11M0 5.500h11" stroke="#6a6a6a" stroke-width="1.200"/></svg>
<svg class="abs" style="left:538px;top:131px" width="4" height="4" viewBox="0 0 4 4"><path d="M4 0v4H0z" fill="#555"/></svg>
<div class="abs" style="left:0.0px;top:136.0px;width:549.0px;height:32.5px;background:#292929;"></div>
<div class="abs" style="left:0.0px;top:168.0px;width:549.0px;height:27.0px;background:#2b2b2b;border-top:1px solid #4a4a4a;border-bottom:1px solid #3a3a3a"></div>
<svg class="abs" style="left:14px;top:175px" width="4" height="15" viewBox="0 0 4 15"><circle cx="2" cy="2" r="1.300" fill="#a6a6a6"/><circle cx="2" cy="7.500" r="1.300" fill="#a6a6a6"/><circle cx="2" cy="13" r="1.300" fill="#a6a6a6"/></svg>
<div class="abs" style="left:28.0px;top:169.0px;width:62.0px;height:25.5px;background:#000;"></div>
<div class="t" style="left:37.6px;top:174.8px;font-size:12px;color:#fff;letter-spacing:-0.190px;">Console</div>
<div class="t" style="left:100.0px;top:174.8px;font-size:12px;color:#e8e8e8;letter-spacing:-0.673px;">Task</div>
<svg class="abs" style="left:526.5px;top:176.5px" width="11" height="11" viewBox="0 0 11 11"><path d="M1 1l9 9M10 1l-9 9" fill="none" stroke="#c8c8c8" stroke-width="1.300"/></svg>
<div class="abs" style="left:0.0px;top:195.0px;width:549.0px;height:27.0px;background:#2b2b2b;border-bottom:1px solid #3a3a3a"></div>
<svg class="abs" style="left:8px;top:202.5px" width="16" height="13" viewBox="0 0 16 13"><rect x=".6" y=".6" width="14.600" height="11.800" fill="none" stroke="#9a9a9a" stroke-width="1.200"/><path d="M4.600.6v11.800" stroke="#9a9a9a" stroke-width="1.200"/><path d="M7.500 3.500v6l4.800-3z" fill="#9a9a9a"/></svg>
<svg class="abs" style="left:37.5px;top:202.5px" width="14" height="14" viewBox="0 0 14 14"><circle cx="7" cy="7" r="5.800" fill="none" stroke="#9a9a9a" stroke-width="1.600"/><path d="M3 3l8 8" stroke="#9a9a9a" stroke-width="1.600"/></svg>
<div class="abs" style="left:62.0px;top:200.0px;width:1.0px;height:18.0px;background:#3d3d3d;"></div>
<div class="t" style="left:71.8px;top:202.0px;font-size:12px;color:#e0e0e0;letter-spacing:-0.148px;">appservice (#3)</div>
<svg class="abs" style="left:192.5px;top:205px" width="8" height="7" viewBox="0 0 8 7"><path d="M0 0h8L4 7z" fill="#9a9a9a"/></svg>
<div class="abs" style="left:209.0px;top:200.0px;width:1.0px;height:18.0px;background:#3d3d3d;"></div>
<svg class="abs" style="left:219.5px;top:203px" width="18" height="12" viewBox="0 0 18 12"><path d="M.5 6C2.500 2.500 5.500.6 9 .6s6.500 1.900 8.500 5.400c-2 3.500-5 5.400-8.500 5.400S2.500 9.500.5 6z" fill="#a6a6a6"/><circle cx="9" cy="6" r="3.600" fill="#2b2b2b"/><circle cx="9" cy="6" r="2" fill="#a6a6a6"/></svg>
<div class="abs" style="left:246.0px;top:200.0px;width:1.0px;height:18.0px;background:#3d3d3d;"></div>
<div class="abs" style="left:253px;top:199px;width:98px;height:21px;border:1px solid #555;background:#232323"></div>
<div class="t" style="left:258.5px;top:203.0px;font-size:12px;color:#d0d0d0;">Filter</div>
<div class="t" style="left:359.5px;top:202.0px;font-size:12px;color:#e0e0e0;letter-spacing:-0.061px;">Default levels</div>
<svg class="abs" style="left:434.5px;top:205px" width="7" height="7" viewBox="0 0 7 7"><path d="M0 0h7L3.500 7z" fill="#9a9a9a"/></svg>
<div class="abs" style="left:455.0px;top:200.0px;width:1.0px;height:18.0px;background:#3d3d3d;"></div>
<div class="t" style="left:465.5px;top:202.0px;font-size:12px;color:#a0a0a0;">3 hidden</div>
<svg class="abs" style="left:524.0px;top:202.0px" width="16" height="16" viewBox="0 0 16 16"><path d="M13.25 6.74 L15.21 6.86 L15.21 9.14 L13.25 9.26 L12.60 10.82 L13.91 12.29 L12.29 13.91 L10.82 12.60 L9.26 13.25 L9.14 15.21 L6.86 15.21 L6.74 13.25 L5.18 12.60 L3.71 13.91 L2.09 12.29 L3.40 10.82 L2.75 9.26 L0.79 9.14 L0.79 6.86 L2.75 6.74 L3.40 5.18 L2.09 3.71 L3.71 2.09 L5.18 3.40 L6.74 2.75 L6.86 0.79 L9.14 0.79 L9.26 2.75 L10.82 3.40 L12.29 2.09 L13.91 3.71 L12.60 5.18ZM8 5.400a2.600 2.600 0 1 0 .01 0z" fill="#a6a6a6" fill-rule="evenodd"/></svg>
<div class="abs" style="left:0.0px;top:222.0px;width:534.0px;height:8.0px;background:#342f06;border-bottom:1px solid #665500;overflow:hidden"></div>
<div class="abs mono" style="left:24px;top:214.5px;height:16px;font-size:11px;font-weight:400;line-height:14px;color:#f2e9c7;white-space:nowrap;clip-path:inset(7.500px 0 0 0)">undefined is invalid.</div>
<div class="abs" style="left:0.0px;top:231.0px;width:534.0px;height:33.0px;background:#342f06;border-bottom:1px solid #665500"></div>
<svg class="abs" style="left:6.5px;top:234.5px" width="11" height="11" viewBox="0 0 11 11"><path d="M5.500.4L10.800 10.400H.2z" fill="#f4d03a"/><path d="M5.500 3.800v3.500M5.500 8.100v1.200" stroke="#fff" stroke-width="1.300"/></svg>
<svg class="abs" style="left:26px;top:237.5px" width="6" height="7" viewBox="0 0 6 7"><path d="M.5.300L5.500 3.500.5 6.700z" fill="#9a9a9a"/></svg>
<div class="abs mono" style="left:33.8px;top:235px;font-size:11px;font-weight:400;line-height:14px;color:#f2e9c7;white-space:pre">Setting data field "total" to</div>
<div class="abs mono" style="left:24px;top:249px;font-size:11px;font-weight:400;line-height:14px;color:#f2e9c7;white-space:pre">undefined is invalid.</div>
<div class="abs mono" style="left:241.4px;top:235px;font-size:11px;font-weight:400;line-height:14px;color:#d8d8d8;white-space:pre;text-decoration:underline">WASubContext.js?t=we…25027441&amp;v=2.19.4:2</div>
<div class="abs" style="left:0.0px;top:264.0px;width:534.0px;height:37.0px;background:#242424;"></div>
<svg class="abs" style="left:8.5px;top:269.5px" width="6" height="9" viewBox="0 0 6 9"><path d="M1 1l3.800 3.500L1 8" fill="none" stroke="#3d7de0" stroke-width="1.500"/></svg>
<div class="abs" style="left:534.0px;top:222.0px;width:15.0px;height:79.0px;background:#2b2b2b;"></div>
<div class="abs" style="left:534.0px;top:285.0px;width:15.0px;height:16.0px;background:#3c3c3c;"></div>
<div class="abs" style="left:0.0px;top:301.0px;width:549.0px;height:29.0px;background:#3a3a3a;"></div>
</div>
</div>
</div>
<div class="abs" style="left:332px;top:963px;width:1250px;height:3px;background:linear-gradient(to bottom,rgba(40,56,56,0),rgba(36,50,50,.6))"></div>
<div class="abs" style="left:0;top:965px;width:1912px;height:1px;background:#2e3b3c"></div>
<div class="abs" style="left:742px;top:965px;width:840px;height:1px;background:#565656"></div>
</body>
</html>
